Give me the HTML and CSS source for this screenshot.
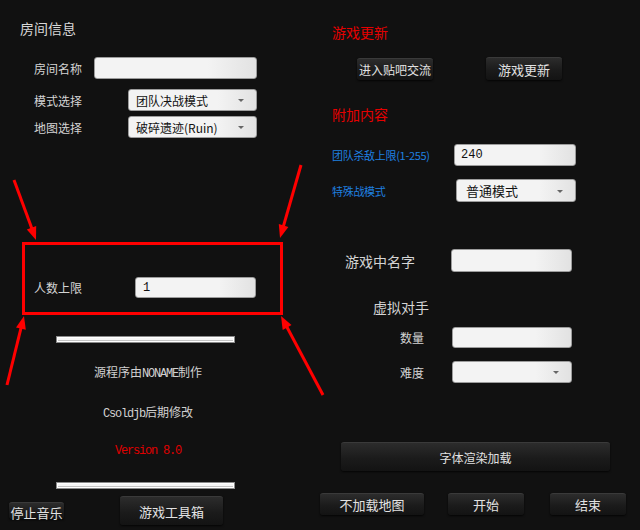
FILE: index.html
```html
<!DOCTYPE html>
<html lang="zh-CN">
<head>
  <meta charset="UTF-8">
  <title>房间设置</title>
  <link rel="stylesheet" href="styles.css">
</head>
<body>
  <div class="launcher">
    <section class="panel panel-left">
      <h2 class="caption">房间信息</h2>
      <div class="field field-name"><label>房间名称</label><input class="input" value=""></div>
      <div class="field field-mode"><label>模式选择</label><div class="select">团队决战模式</div></div>
      <div class="field field-map"><label>地图选择</label><div class="select">破碎遗迹(Ruin)</div></div>
      <div class="field field-players"><label>人数上限</label><input class="input" value="1"></div>

      <div class="credits">
        <div class="bar"></div>
        <p>源程序由<span class="mono">NONAME</span>制作</p>
        <p><span class="mono">Csoldjb</span>后期修改</p>
        <p class="version">Version 8.0</p>
        <div class="bar"></div>
      </div>

      <div class="toolbar toolbar-left">
        <button class="btn btn-music">停止音乐</button>
        <button class="btn btn-tools">游戏工具箱</button>
      </div>
    </section>

    <section class="panel panel-right">
      <h2 class="caption caption-red">游戏更新</h2>
      <div class="toolbar toolbar-update">
        <button class="btn btn-forum">进入贴吧交流</button>
        <button class="btn btn-update">游戏更新</button>
      </div>

      <h2 class="caption caption-red caption-extra">附加内容</h2>
      <div class="field field-kill"><label class="blue">团队杀敌上限(1-255)</label><input class="input" value="240"></div>
      <div class="field field-special"><label class="blue">特殊战模式</label><div class="select">普通模式</div></div>

      <div class="field field-nick"><label class="big">游戏中名字</label><input class="input" value=""></div>
      <h3 class="subhead">虚拟对手</h3>
      <div class="field field-count"><label>数量</label><input class="input" value=""></div>
      <div class="field field-level"><label>难度</label><div class="select"></div></div>

      <button class="btn btn-font">字体渲染加载</button>
      <div class="toolbar toolbar-bottom">
        <button class="btn btn-nomap">不加载地图</button>
        <button class="btn btn-start">开始</button>
        <button class="btn btn-end">结束</button>
      </div>
    </section>

    <!-- red callout around the player limit -->
    <svg class="marks" width="640" height="530" viewBox="0 0 640 530">
      <g stroke="#ff0000" stroke-width="3" fill="none">
        <rect x="23.5" y="243.5" width="258" height="70"/>
        <line x1="14" y1="180" x2="32.6" y2="230.6"/>
        <line x1="301" y1="165" x2="282.8" y2="228.4"/>
        <line x1="7" y1="385" x2="21.6" y2="325.7"/>
        <line x1="323" y1="395" x2="285.7" y2="324.8"/>
      </g>
      <g fill="#ff0000">
        <polygon points="36,240 26.8,229.5 36.2,226.1"/>
        <polygon points="280,238 278.8,224.1 288.4,226.9"/>
        <polygon points="24,316 25.8,329.8 16,327.4"/>
        <polygon points="281,316 291.5,325.1 282.7,329.9"/>
      </g>
    </svg>
  </div>
</body>
</html>
```

FILE: styles.css
```css
body {
  margin: 0;
  background: #111111;
  font-family: "Noto Sans CJK SC", "Noto Sans", sans-serif;
  color: #d4d4d4;
  font-size: 12px;
}
.launcher {
  position: relative;
  width: 640px;
  height: 530px;
  display: flex;
  overflow: hidden;
}
.panel {
  width: 320px;
  display: flex;
  flex-direction: column;
  align-items: flex-start;
}
.panel > .field {
  align-self: stretch;
}

/* headings */
.caption {
  margin: 0;
  height: 18px;
  line-height: 18px;
  font-size: 14px;
  font-weight: normal;
  color: #d8d8d8;
}
.panel-left .caption {
  margin: 19px 0 0 20px;
}
.panel-right .caption {
  margin: 23px 0 0 12px;
}
.caption-red {
  color: #e60000;
}
.panel-right .caption-extra {
  margin-top: 25px;
}
.subhead {
  margin: 26px 0 0 53px;
  height: 18px;
  line-height: 18px;
  font-size: 14px;
  font-weight: normal;
}

/* form rows */
.field {
  display: flex;
  align-items: center;
  justify-content: space-between;
  box-sizing: border-box;
}
.field label {
  white-space: nowrap;
}
.field label.blue {
  color: #1f80e0;
  font-size: 11px;
  letter-spacing: -0.3px;
}
.field label.big {
  font-size: 14px;
}
.input,
.select {
  position: relative;
  box-sizing: border-box;
  height: 100%;
  margin: 0;
  padding: 0 0 0 7px;
  border: 1px solid #9c9c9c;
  border-radius: 3px;
  background: linear-gradient(to right, #f3f3f3 70%, #e2e2e2);
  color: #111;
  font-size: 12px;
  display: flex;
  align-items: center;
  outline: none;
}
.input {
  font-family: "Liberation Mono", monospace;
}
.select::after {
  content: "";
  position: absolute;
  right: 12px;
  top: 50%;
  margin-top: -1px;
  border-left: 3px solid transparent;
  border-right: 3px solid transparent;
  border-top: 3px solid #666;
}

.field-name { margin: 20px 63px 0 34px; height: 22px; }
.field-name .input { width: 163px; }
.field-mode { margin: 10px 63px 0 34px; height: 22px; }
.field-map { margin: 5px 63px 0 34px; height: 22px; }
.field-mode .select,
.field-map .select { width: 129px; }
.field-players { margin: 139px 64px 0 34px; height: 21px; }
.field-players .input { width: 121px; }

.field-kill { margin: 21px 64px 0 12px; height: 22px; }
.field-kill .input { width: 122px; padding-left: 6px; }
.field-special { margin: 13px 64px 0 12px; height: 23px; }
.field-special .select { width: 120px; font-size: 13px; padding-left: 9px; }
.field-nick { margin: 47px 68px 0 25px; height: 23px; }
.field-nick .input { width: 121px; }
.field-count { margin: 11px 68px 0 80px; height: 21px; }
.field-count .input { width: 120px; }
.field-level { margin: 13px 68px 0 80px; height: 22px; }
.field-level .select { width: 120px; }

/* credits block */
.credits {
  margin: 38px 0 0 56px;
  width: 184px;
  text-align: center;
  color: #d0d0d0;
}
.credits p {
  margin: 19px 0 0;
  height: 20px;
  line-height: 20px;
  font-size: 12px;
}
.credits p + p {
  margin-top: 20px;
}
.credits p.version {
  margin-top: 19px;
  color: #e00000;
}
.mono,
.version {
  font-family: "Liberation Mono", monospace;
  letter-spacing: -1.2px;
}
.bar {
  width: 179px;
  height: 7px;
  box-sizing: border-box;
  border: 1px solid #8a8a8a;
  background: #f6f6f6;
  box-shadow: inset 0 0 0 1px #ffffff, inset 0 -1px 0 1px #c4c4c4;
}
.credits .bar + p {
  margin-top: 19px;
}
.credits p + .bar {
  margin-top: 21px;
}

/* buttons */
.btn {
  box-sizing: border-box;
  margin: 0;
  padding: 0;
  border: none;
  border-top: 1px solid #3a3a3a;
  border-radius: 3px;
  background: linear-gradient(#2c2c2c, #1b1b1b 55%, #131313);
  box-shadow: 0 1px 2px rgba(0, 0, 0, 0.8);
  color: #e2e2e2;
  font-family: "Noto Sans CJK SC", "Noto Sans", sans-serif;
  font-size: 12px;
  white-space: nowrap;
  cursor: pointer;
}
.toolbar {
  display: flex;
  align-items: center;
}
.toolbar-left {
  margin-top: 7px;
  height: 29px;
}
.btn-music { margin-left: 9px; width: 55px; height: 17px; font-size: 13px; }
.btn-tools { margin-left: 56px; width: 103px; height: 29px; font-size: 13px; }

.toolbar-update {
  margin-top: 16px;
  height: 23px;
}
.btn-forum { margin-left: 37px; width: 76px; height: 22px; }
.btn-update { margin-left: 53px; width: 76px; height: 23px; font-size: 13px; }

.btn-font { margin: 59px 0 0 21px; width: 269px; height: 29px; }
.toolbar-bottom {
  margin-top: 22px;
  height: 22px;
}
.toolbar-bottom .btn { height: 22px; font-size: 13px; }
.btn-nomap { width: 104px; }
.btn-start { margin-left: 24px; width: 76px; }
.btn-end { margin-left: 26px; width: 76px; }

/* callout overlay */
.marks {
  position: absolute;
  left: 0;
  top: 0;
  pointer-events: none;
}
```
